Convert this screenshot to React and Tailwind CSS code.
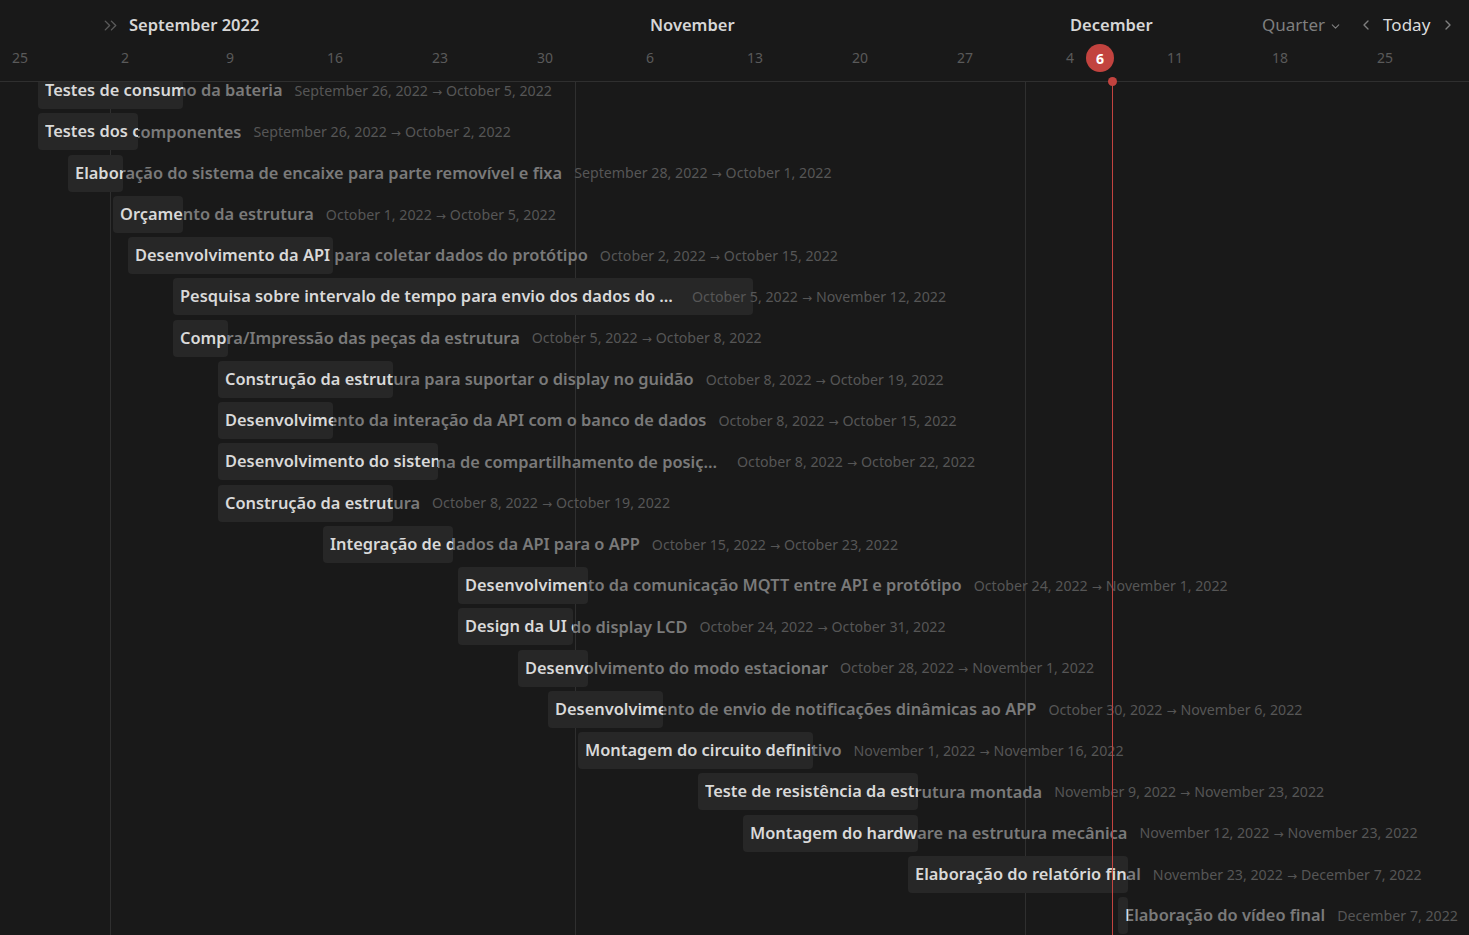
import { ChevronsRight, ChevronDown, ChevronLeft, ChevronRight } from "lucide-react";

const DAY = 15;
const X0 = 38;

// [title, dates, offset in days from Sept 26, length in days]
const tasks = [
  ["Testes de consumo da bateria", "September 26, 2022 → October 5, 2022", 0, 10],
  ["Testes dos componentes", "September 26, 2022 → October 2, 2022", 0, 7],
  ["Elaboração do sistema de encaixe para parte removível e fixa", "September 28, 2022 → October 1, 2022", 2, 4],
  ["Orçamento da estrutura", "October 1, 2022 → October 5, 2022", 5, 5],
  ["Desenvolvimento da API para coletar dados do protótipo", "October 2, 2022 → October 15, 2022", 6, 14],
  ["Pesquisa sobre intervalo de tempo para envio dos dados do protótipo", "October 5, 2022 → November 12, 2022", 9, 39],
  ["Compra/Impressão das peças da estrutura", "October 5, 2022 → October 8, 2022", 9, 4],
  ["Construção da estrutura para suportar o display no guidão", "October 8, 2022 → October 19, 2022", 12, 12],
  ["Desenvolvimento da interação da API com o banco de dados", "October 8, 2022 → October 15, 2022", 12, 8],
  ["Desenvolvimento do sistema de compartilhamento de posição do usuário", "October 8, 2022 → October 22, 2022", 12, 15],
  ["Construção da estrutura", "October 8, 2022 → October 19, 2022", 12, 12],
  ["Integração de dados da API para o APP", "October 15, 2022 → October 23, 2022", 19, 9],
  ["Desenvolvimento da comunicação MQTT entre API e protótipo", "October 24, 2022 → November 1, 2022", 28, 9],
  ["Design da UI do display LCD", "October 24, 2022 → October 31, 2022", 28, 8],
  ["Desenvolvimento do modo estacionar", "October 28, 2022 → November 1, 2022", 32, 5],
  ["Desenvolvimento de envio de notificações dinâmicas ao APP", "October 30, 2022 → November 6, 2022", 34, 8],
  ["Montagem do circuito definitivo", "November 1, 2022 → November 16, 2022", 36, 16],
  ["Teste de resistência da estrutura montada", "November 9, 2022 → November 23, 2022", 44, 15],
  ["Montagem do hardware na estrutura mecânica", "November 12, 2022 → November 23, 2022", 47, 12],
  ["Elaboração do relatório final", "November 23, 2022 → December 7, 2022", 58, 15],
  ["Elaboração do vídeo final", "December 7, 2022", 72, 1],
];

const weeks = ["25", "2", "9", "16", "23", "30", "6", "13", "20", "27", "4", "11", "18", "25"];

function Dates({ text }) {
  const parts = text.split(" → ");
  if (parts.length < 2) return <>{text}</>;
  return (
    <>
      {parts[0]}
      <span className="mx-[4px] text-[12px]" style={{ fontFamily: '"DejaVu Sans", sans-serif' }}>
        →
      </span>
      {parts[1]}
    </>
  );
}

function Label({ title, dates, bright }) {
  return (
    <div className="flex items-center w-max h-full pl-[7px] whitespace-nowrap">
      <span
        className={
          "shrink-0 max-w-[500px] truncate text-[16.4px] font-semibold " +
          (bright ? "text-[#d9d9d9]" : "text-[#7a7a7a]")
        }
      >
        {title}
      </span>
      <span className="shrink-0 ml-3 text-[14.2px] text-[#565656]">
        <Dates text={dates} />
      </span>
    </div>
  );
}

function TaskRow({ title, dates, start, days }) {
  return (
    <div className="h-[41.25px] shrink-0">
      <div className="relative h-full" style={{ marginLeft: X0 + start * DAY }}>
        <div className="h-full">
          <Label title={title} dates={dates} />
        </div>
        <div
          className="absolute top-[2px] left-0 h-[37px] rounded-[4px] bg-[#272727] overflow-hidden"
          style={{ width: days * DAY - 5 }}
        >
          <Label title={title} dates={dates} bright />
        </div>
      </div>
    </div>
  );
}

export default function App() {
  return (
    <div
      className="w-[1469px] h-[935px] bg-[#191919] overflow-hidden flex flex-col"
      style={{ fontFamily: '"Noto Sans", "Open Sans", sans-serif' }}
    >
      <header className="relative z-10 h-[82px] shrink-0 bg-[#191919] border-b border-[#2f2f2f] flex flex-col">
        <div className="h-[50px] flex items-center pl-[100px]">
          <div className="w-[550px] flex items-center gap-[8px]">
            <ChevronsRight size={21} strokeWidth={1.6} className="text-[#5a5a5a]" />
            <span className="text-[16.5px] font-semibold text-[#d6d6d6]">September 2022</span>
          </div>
          <div className="w-[420px] text-[16.5px] font-semibold text-[#d6d6d6]">November</div>
          <div className="w-[192px] text-[16.5px] font-semibold text-[#d6d6d6]">December</div>
          <div className="flex items-center gap-[4px] text-[17px] text-[#7f7f7f]">
            Quarter
            <ChevronDown size={13} strokeWidth={2} className="mt-[2px]" />
          </div>
          <div className="ml-[16px] flex items-center">
            <ChevronLeft size={16} strokeWidth={2} className="text-[#7f7f7f]" />
            <span className="ml-[9px] text-[17px] text-[#dcdcdc]">Today</span>
            <ChevronRight size={16} strokeWidth={2} className="ml-[10px] text-[#7f7f7f]" />
          </div>
        </div>
        <div className="flex items-center h-[16px] -mt-[1px] -ml-[32.5px]">
          {weeks.map((w, i) => (
            <div key={i} className="w-[105px] shrink-0 text-center text-[14px] text-[#5a5a5a]">
              {w}
            </div>
          ))}
        </div>
        <div className="absolute left-[1086px] top-[44px] w-[28px] h-[28px] rounded-full bg-[#c2433f] flex items-center justify-center text-[14px] font-bold text-white">
          6
        </div>
        <div className="absolute left-[1108px] bottom-[-5px] w-[9px] h-[9px] rounded-full bg-[#c2433f]" />
      </header>

      <main className="relative flex-1 overflow-hidden">
        <div className="absolute inset-y-0 left-[110px] w-px bg-[#2f2f2f]" />
        <div className="absolute inset-y-0 left-[575px] w-px bg-[#2f2f2f]" />
        <div className="absolute inset-y-0 left-[1025px] w-px bg-[#2f2f2f]" />
        <div className="relative flex flex-col -mt-[12px]">
          {tasks.map(([title, dates, start, days], i) => (
            <TaskRow key={i} title={title} dates={dates} start={start} days={days} />
          ))}
        </div>
        <div className="absolute inset-y-0 left-[1112px] w-px bg-[#c2433f] z-20" />
      </main>
    </div>
  );
}
